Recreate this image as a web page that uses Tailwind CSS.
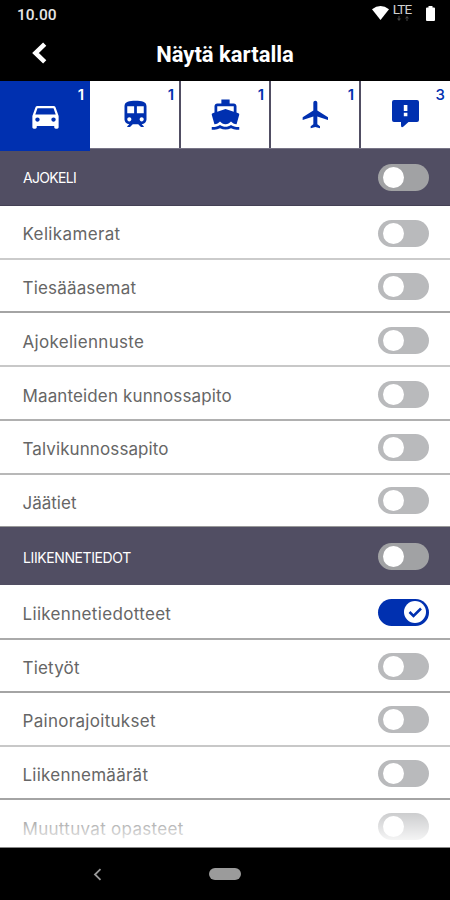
<!DOCTYPE html>
<html lang="fi">
<head>
<meta charset="utf-8">
<title>Näytä kartalla</title>
<script src="https://cdn.jsdelivr.net/npm/@tailwindcss/browser@4"></script>
</head>
<body class="w-[450px] h-[900px] overflow-hidden bg-black font-['Inter',sans-serif]">
<div class="flex h-[900px] w-[450px] flex-col">
  <div class="flex h-[28px] shrink-0 items-center justify-between pl-[17px] pr-[15px] text-white">
    <span class="mt-[2px] font-['Roboto',sans-serif] text-[15.500px] font-medium leading-[28px] text-[#e6e6e6]">10.00</span>
    <div class="flex h-full items-start">
      <svg class="mt-[5px] h-[15px] w-[17px]" viewBox="0 0 17 15" fill="#fff"><path d="M0 4.200Q8.500-2.200 17 4.200L8.500 15Z"/></svg>
      <div class="ml-[3px] flex w-[20px] flex-col items-center">
        <span class="mt-[2px] font-['Roboto',sans-serif] text-[13.500px] leading-[15px] tracking-[-0.9px] text-[#d0d0d0]">LTE</span>
        <svg class="-mt-px ml-[2px] h-[6px] w-[14px]" viewBox="0 0 14 6" fill="#444"><path d="M1 2.500h4L3 5zM2.500 0h1v3h-1zM9 2.500h4L11 0zM10.500 2h1v3h-1z"/></svg>
      </div>
      <svg class="ml-[14px] mt-[6px] h-[15px] w-[9px]" viewBox="0 0 9 15" fill="#fff"><path d="M2.500 0h4v1.500H8q1 0 1 1V14q0 1-1 1H1q-1 0-1-1V2.500q0-1 1-1h1.500z"/></svg>
    </div>
  </div>
  <div class="grid h-[53px] shrink-0 grid-cols-[100px_1fr_100px] items-center text-white">
    <svg class="-mt-[3px] ml-[31px] h-[24px] w-[16px]" viewBox="0 0 16 24" fill="none" stroke="#fff" stroke-width="4.600"><path d="M13.700 3.200 4.500 12l9.200 8.800"/></svg>
    <h1 class="text-center font-['Roboto',sans-serif] text-[22px] font-bold leading-[28px]">Näytä kartalla</h1>
  </div>
  <nav class="grid h-[67px] shrink-0 grid-cols-[90px_91px_90px_90px_89px] bg-white text-[#0030b0]">
    <div class="relative z-10 h-[70px] bg-[#0030b0] text-white">
      <span class="absolute right-[6px] top-[4px] text-[15px] font-semibold leading-[20px]">1</span>
      <svg class="ml-[28px] mt-[18px] h-[34px] w-[35px]" viewBox="0 0 24 24" preserveAspectRatio="none" fill="currentColor"><path d="M18.920 6.010C18.720 5.420 18.160 5 17.500 5h-11c-.66 0-1.210.42-1.420 1.010L3 12v8c0 .55.45 1 1 1h1c.55 0 1-.45 1-1v-1h12v1c0 .55.45 1 1 1h1c.55 0 1-.45 1-1v-8l-2.080-5.990zM6.500 16c-.83 0-1.500-.67-1.500-1.500S5.670 13 6.500 13s1.500.67 1.500 1.500S7.330 16 6.500 16zm11 0c-.83 0-1.500-.67-1.500-1.500s.67-1.500 1.500-1.500 1.500.67 1.500 1.500-.67 1.500-1.500 1.500zM5 11l1.500-4.500h11L19 11H5z"/></svg>
    </div>
    <div class="relative border-r-2 border-[#514e63]">
      <span class="absolute right-[5px] top-[4px] text-[15px] font-semibold leading-[20px]">1</span>
      <svg class="ml-[29px] mt-[17px] h-[33px] w-[33px]" viewBox="0 0 24 24" preserveAspectRatio="none" fill="currentColor"><path d="M12 2c-4.420 0-8 .5-8 4v9.500C4 17.430 5.570 19 7.500 19L6 20.500v.5h2l2-2h4l2 2h2v-.5L16.500 19c1.930 0 3.500-1.570 3.500-3.500V6c0-3.500-3.580-4-8-4zM7.500 17c-.83 0-1.500-.67-1.500-1.500S6.670 14 7.500 14s1.500.67 1.500 1.500S8.330 17 7.500 17zm3.500-6H6V6h5v5zm5.500 6c-.83 0-1.500-.67-1.500-1.500s.67-1.500 1.500-1.500 1.500.67 1.500 1.500-.67 1.500-1.500 1.500zm1.500-6h-5V6h5v5z"/></svg>
    </div>
    <div class="relative border-r-2 border-[#514e63]">
      <span class="absolute right-[5px] top-[4px] text-[15px] font-semibold leading-[20px]">1</span>
      <svg class="ml-[28px] mt-[17px] h-[33px] w-[33px]" viewBox="0 0 24 24" fill="currentColor"><path d="M20 21c-1.390 0-2.780-.47-4-1.320-2.440 1.710-5.560 1.710-8 0C6.780 20.530 5.390 21 4 21H2v2h2c1.380 0 2.740-.35 4-.99 2.520 1.290 5.480 1.290 8 0 1.260.65 2.620.99 4 .99h2v-2h-2zM3.950 19H4c1.600 0 3.020-.88 4-2 .98 1.120 2.400 2 4 2s3.020-.88 4-2c.98 1.120 2.400 2 4 2h.05l1.890-6.680c.08-.26.06-.54-.06-.78s-.34-.42-.6-.5L20 10.620V6c0-1.100-.9-2-2-2h-3V1H9v3H6c-1.100 0-2 .9-2 2v4.620l-1.290.42c-.26.08-.48.26-.6.5s-.15.52-.06.78L3.950 19zM6 6h12v3.970L12 8 6 9.970V6z"/></svg>
    </div>
    <div class="relative border-r-2 border-[#514e63]">
      <span class="absolute right-[5px] top-[4px] text-[15px] font-semibold leading-[20px]">1</span>
      <svg class="ml-[29px] mt-[17px] h-[33px] w-[32px]" viewBox="0 0 24 24" preserveAspectRatio="none" fill="currentColor"><path d="M21 16v-2l-8-5V3.500c0-.83-.67-1.500-1.500-1.500S10 2.670 10 3.500V9l-8 5v2l8-2.500V19l-2 1.500V22l3.500-1 3.500 1v-1.500L13 19v-5.500l8 2.500z"/></svg>
    </div>
    <div class="relative">
      <span class="absolute right-[5px] top-[4px] text-[15px] font-medium leading-[20px]">3</span>
      <svg class="ml-[31px] mt-[19px] h-[28px] w-[27px]" viewBox="0 0 27 28" fill="currentColor"><path fill-rule="evenodd" d="M2 0h23q2 0 2 2v18q0 2-2 2h-8.500L11.500 26.500Q9 28.500 9 25v-3H2q-2 0-2-2V2Q0 0 2 0zM11.800 5v6h3.600V5zM11.800 12.700v3.600h3.600v-3.600z"/></svg>
    </div>
  </nav>
  <main class="relative flex h-[700px] shrink-0 flex-col overflow-hidden bg-white text-[17px] leading-[24px] text-[#666]">
    <div class="flex h-[58px] shrink-0 items-center justify-between border-y border-t-[#777486] border-b-[#444155] bg-[#514e63] pl-[23px] pr-[21px] text-[14px] text-white"><span class="mt-[1px] tracking-[-0.7px]">AJOKELI</span><span class="h-[27px] w-[51px] rounded-full bg-[#a1a2a4] p-[3px] pl-[5px]"><i class="block size-[21px] rounded-full bg-white"></i></span></div>
    <div class="flex h-[54px] shrink-0 items-center justify-between border-b-2 border-[#cbcbcb] pl-[22.500px] pr-[21px]"><span class="mt-[4px] tracking-[0.36px]">Kelikamerat</span><span class="mt-[2px] h-[27px] w-[51px] rounded-full bg-[#b9babc] p-[3px] pl-[5px]"><i class="block size-[21px] rounded-full bg-white"></i></span></div>
    <div class="flex h-[53px] shrink-0 items-center justify-between border-b-2 border-[#a4a4a4] pl-[22.500px] pr-[21px]"><span class="mt-[5px] tracking-[0.18px]">Tiesääasemat</span><span class="mt-[2px] h-[27px] w-[51px] rounded-full bg-[#b9babc] p-[3px] pl-[5px]"><i class="block size-[21px] rounded-full bg-white"></i></span></div>
    <div class="flex h-[54px] shrink-0 items-center justify-between border-b-2 border-[#c8c8c8] pl-[22.500px] pr-[21px]"><span class="mt-[5px] tracking-[0.3px]">Ajokeliennuste</span><span class="mt-[2px] h-[27px] w-[51px] rounded-full bg-[#b9babc] p-[3px] pl-[5px]"><i class="block size-[21px] rounded-full bg-white"></i></span></div>
    <div class="flex h-[54px] shrink-0 items-center justify-between border-b-2 border-[#b0b0b0] pl-[22.500px] pr-[21px]"><span class="mt-[5px] tracking-[0.13px]">Maanteiden kunnossapito</span><span class="mt-[2px] h-[27px] w-[51px] rounded-full bg-[#b9babc] p-[3px] pl-[5px]"><i class="block size-[21px] rounded-full bg-white"></i></span></div>
    <div class="flex h-[54px] shrink-0 items-center justify-between border-b-2 border-[#b8b8b8] pl-[22.500px] pr-[21px]"><span class="mt-[3px] tracking-[0.1px]">Talvikunnossapito</span><span class="mt-0 h-[27px] w-[51px] rounded-full bg-[#b9babc] p-[3px] pl-[5px]"><i class="block size-[21px] rounded-full bg-white"></i></span></div>
    <div class="flex h-[52px] shrink-0 items-center justify-between border-b border-[#999] pl-[22.500px] pr-[21px]"><span class="mt-[4px]">Jäätiet</span><span class="h-[27px] w-[51px] rounded-full bg-[#b9babc] p-[3px] pl-[5px]"><i class="block size-[21px] rounded-full bg-white"></i></span></div>
    <div class="flex h-[58px] shrink-0 items-center justify-between bg-[#514e63] pl-[23px] pr-[21px] text-[14px] text-white"><span class="mt-[3px] tracking-[-0.4px]">LIIKENNETIEDOT</span><span class="h-[27px] w-[51px] rounded-full bg-[#a1a2a4] p-[3px] pl-[5px]"><i class="block size-[21px] rounded-full bg-white"></i></span></div>
    <div class="flex h-[55px] shrink-0 items-center justify-between border-b-2 border-[#aaa] pl-[22.500px] pr-[21px]"><span class="mt-[4px] tracking-[0.33px]">Liikennetiedotteet</span><span class="mt-px flex h-[27px] w-[51px] items-center justify-end rounded-full bg-[#0030b0] pr-[3px]"><svg class="size-[22px] rounded-full bg-white" viewBox="0 0 22 22" fill="none" stroke="#0030b0" stroke-width="2.500"><path d="m5.500 11 4 4L17 7.500"/></svg></span></div>
    <div class="flex h-[53px] shrink-0 items-center justify-between border-b-2 border-[#a4a4a4] pl-[22.500px] pr-[21px]"><span class="mt-[5px] tracking-[0.2px]">Tietyöt</span><span class="mt-px h-[27px] w-[51px] rounded-full bg-[#b9babc] p-[3px] pl-[5px]"><i class="block size-[21px] rounded-full bg-white"></i></span></div>
    <div class="flex h-[54px] shrink-0 items-center justify-between border-b-2 border-[#c8c8c8] pl-[22.500px] pr-[21px]"><span class="mt-[4px] tracking-[0.3px]">Painorajoitukset</span><span class="mt-px h-[27px] w-[51px] rounded-full bg-[#b9babc] p-[3px] pl-[5px]"><i class="block size-[21px] rounded-full bg-white"></i></span></div>
    <div class="flex h-[53px] shrink-0 items-center justify-between border-b-2 border-[#a4a4a4] pl-[22.500px] pr-[21px]"><span class="mt-[5px] tracking-[0.25px]">Liikennemäärät</span><span class="mt-[2px] h-[27px] w-[51px] rounded-full bg-[#b9babc] p-[3px] pl-[5px]"><i class="block size-[21px] rounded-full bg-white"></i></span></div>
    <div class="flex h-[48px] shrink-0 items-center justify-between border-b border-[#888] pl-[22.500px] pr-[21px]"><span class="mt-[10px] tracking-[0.3px]">Muuttuvat opasteet</span><span class="mt-[6px] h-[27px] w-[51px] rounded-full bg-[#b9babc] p-[3px] pl-[5px]"><i class="block size-[21px] rounded-full bg-white"></i></span></div>
    <div class="absolute inset-x-0 bottom-px h-[47px] bg-linear-to-b from-white/0 to-white"></div>
  </main>
  <footer class="relative grid h-[52px] shrink-0 bg-black">
    <svg class="absolute left-[93px] top-[20px] h-[13px] w-[9px]" viewBox="0 0 9 13" fill="none" stroke="#999" stroke-width="1.800"><path d="M7.500 1.200 2 6.500l5.500 5.300"/></svg>
    <span class="mt-[20px] h-[12px] w-[32px] justify-self-center rounded-full bg-[#9b9b9b]"></span>
  </footer>
</div>
</body>
</html>
